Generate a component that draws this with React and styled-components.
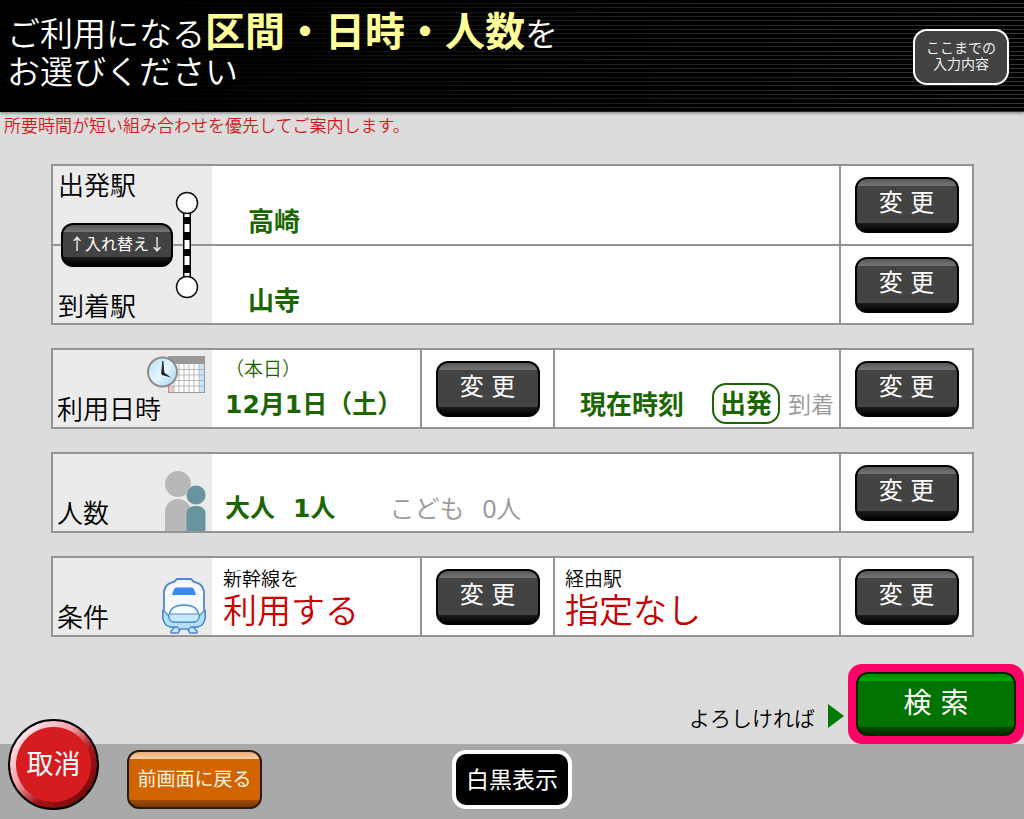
import React from "react"
import styled, { createGlobalStyle, css } from "styled-components"

const jp = `"Noto Sans CJK JP", sans-serif`
const mixed = `"DejaVu Sans", "Noto Sans CJK JP", sans-serif`
const light = `"Liberation Sans", "Noto Sans CJK JP", sans-serif`

const GlobalStyle = createGlobalStyle`
  * {
    box-sizing: border-box;
  }
  body {
    margin: 0;
    background: #dcdcdc;
    color: #000;
    font-family: ${jp};
  }
  button {
    margin: 0;
    padding: 0 0 4px;
    font-family: ${mixed};
    cursor: pointer;
  }
`

const Page = styled.div`
  display: flex;
  flex-direction: column;
  min-height: 100vh;
`

const Header = styled.header`
  display: flex;
  justify-content: space-between;
  align-items: flex-start;
  min-height: 112px;
  padding: 10px 15px 10px 7px;
  background: linear-gradient(90deg, #000 12%, rgba(0, 0, 0, 0) 100%),
    repeating-linear-gradient(
      180deg,
      #000 0,
      #000 3px,
      #363636 3px,
      #363636 4px,
      #000 4px,
      #000 7px,
      #363636 7px,
      #363636 8px,
      #000 8px,
      #000 12px,
      #363636 12px,
      #363636 13px
    );
  box-shadow: 0 1px 3px #777;
`

const Title = styled.h1`
  margin: 0;
  color: #fff;
  font-size: 33px;
  font-weight: 350;
  line-height: 38px;
  strong {
    color: #ffff99;
    font-size: 40px;
    font-weight: 700;
    line-height: 38px;
  }
`

const HistoryButton = styled.button`
  width: 96px;
  height: 56px;
  margin-top: 19px;
  border: 2px solid #fff;
  border-radius: 14px;
  background: #434343;
  color: #fff;
  font-family: ${jp};
  font-size: 14px;
  font-weight: 350;
  line-height: 16px;
`

const Main = styled.main`
  flex: 1;
  display: flex;
  flex-direction: column;
`

const Notice = styled.p`
  margin: 0 0 27px;
  padding: 0 4px;
  color: #d01818;
  font-size: 17px;
  font-weight: 350;
  line-height: 25px;
`

const Panels = styled.div`
  display: flex;
  flex-direction: column;
  gap: 23px;
  padding: 0 50px 0 51px;
`

const Panel = styled.section`
  display: grid;
  grid-template-columns: ${p =>
    p.$split ? "159px 208px 133px 1fr 133px" : "159px 1fr 133px"};
  grid-auto-rows: minmax(77px, auto);
  border: 2px solid #949494;
  background: #fff;
`

const RoutePanel = styled(Panel)`
  grid-template-rows: minmax(78px, auto) minmax(79px, auto);
`

const Label = styled.h2`
  margin: 0;
  font-size: 26px;
  font-weight: 350;
  line-height: 32px;
`

const LabelCell = styled.div`
  display: grid;
  padding: 0 6px 0 4px;
  background: #ebebeb;
  > * {
    grid-area: 1 / 1;
  }
  ${Label} {
    align-self: end;
    padding-bottom: 3px;
    z-index: 1;
  }
  svg {
    display: block;
    justify-self: end;
    align-self: ${p => p.$icon || "end"};
  }
`

const RouteCell = styled.div`
  grid-row: span 2;
  display: flex;
  justify-content: space-between;
  align-items: center;
  padding: 2px 13px 2px 5px;
  background: linear-gradient(
      transparent 78px,
      #949494 78px,
      #949494 80px,
      transparent 80px
    )
    #ebebeb;
  svg {
    display: block;
  }
`

const RouteLabels = styled.div`
  align-self: stretch;
  display: flex;
  flex-direction: column;
  justify-content: space-between;
`

const Cell = styled.div`
  display: flex;
  flex-direction: column;
  justify-content: flex-end;
  padding: 0 6px 6px ${p => p.$indent || 13}px;
  border-top: ${p => (p.$below ? "2px solid #949494" : "none")};
  white-space: nowrap;
`

const TimeCell = styled(Cell)`
  flex-direction: row;
  justify-content: flex-end;
  align-items: flex-end;
  gap: 8px;
  padding-right: 5px;
  border-left: 2px solid #949494;
`

const ConditionCell = styled(Cell)`
  padding-bottom: 7px;
  padding-left: ${p => (p.$divided ? 10 : 11)}px;
  border-left: ${p => (p.$divided ? "2px solid #949494" : "none")};
`

const ButtonCell = styled.div`
  display: flex;
  justify-content: center;
  align-items: center;
  border-left: 2px solid #949494;
  border-top: ${p => (p.$below ? "2px solid #949494" : "none")};
`

const Value = styled.span`
  color: ${p => (p.$off ? "#999" : "#1b6600")};
  font-family: ${p => (p.$off ? light : mixed)};
  font-size: ${p => (p.$counted ? 25 : 26)}px;
  font-weight: ${p => (p.$off ? 350 : 700)};
  line-height: 32px;
`

const Today = styled.span`
  margin-bottom: 6px;
  color: #1b6600;
  font-size: 19px;
  font-weight: 350;
  line-height: 30px;
`

const Time = styled(Value)`
  margin-right: 20px;
`

const Selected = styled(Value)`
  margin-bottom: -3px;
  padding: 3px 6px 2px;
  border: 2px solid #1b6600;
  border-radius: 14px;
`

const Unselected = styled(Value)`
  font-size: 23px;
`

const People = styled.div`
  display: flex;
  gap: 54px;
`

const Count = styled.div`
  display: flex;
  gap: 18px;
`

const ConditionName = styled.span`
  font-size: 19px;
  font-weight: 350;
  line-height: 24px;
`

const ConditionValue = styled.span`
  color: #c80000;
  font-size: 34px;
  font-weight: 350;
  line-height: 38px;
`

const gloss = css`
  border: 2px solid #000;
  border-radius: 12px;
  background: linear-gradient(
    180deg,
    #585858 0,
    #747474 7px,
    #434343 7px,
    #434343 calc(100% - 8px),
    #1c1c1c calc(100% - 8px),
    #000 100%
  );
  color: #fff;
`

const ChangeButton = styled.button`
  ${gloss}
  width: 104px;
  height: 56px;
  font-size: 24px;
  line-height: 32px;
`

const SwapButton = styled.button`
  ${gloss}
  width: 112px;
  height: 44px;
  margin-left: 3px;
  font-family: ${jp};
  font-size: 16px;
`

const SearchRow = styled.div`
  display: flex;
  justify-content: flex-end;
  align-items: flex-end;
  margin-top: auto;
  padding-top: 27px;
`

const Hint = styled.span`
  display: flex;
  align-items: center;
  gap: 13px;
  margin: 0 4px 11px 0;
  font-size: 21px;
  font-weight: 350;
  line-height: 32px;
`

const Arrow = styled.span`
  border-left: 16px solid #007a00;
  border-top: 12px solid transparent;
  border-bottom: 12px solid transparent;
  margin-bottom: 2px;
`

const SearchFrame = styled.div`
  padding: 8px;
  border-radius: 14px;
  background: #ff0066;
`

const SearchButton = styled.button`
  display: block;
  width: 160px;
  height: 64px;
  padding-bottom: 6px;
  border: 2px solid #002800;
  border-radius: 12px;
  background: linear-gradient(
    180deg,
    #009000 0,
    #00a800 7px,
    #007300 7px,
    #007300 calc(100% - 7px),
    #004d00 calc(100% - 7px),
    #003000 100%
  );
  color: #fff;
  font-size: 28px;
`

const Footer = styled.footer`
  display: grid;
  grid-template-columns: 1fr auto 1fr;
  height: 75px;
  background: #a9a9a9;
`

const FooterLeft = styled.div`
  display: flex;
  align-items: flex-start;
  gap: 28px;
  padding-left: 8px;
`

const CancelButton = styled.button`
  width: 91px;
  height: 91px;
  margin-top: -25px;
  border: 2px solid #000;
  border-radius: 50%;
  background: radial-gradient(circle, #d71c1f 37px, transparent 38px),
    linear-gradient(135deg, #ffe0e8 15%, #f4a0a8 40%, #a81418 62%, #780c0e 85%);
  color: #fff;
  font-size: 27px;
`

const BackButton = styled.button`
  width: 135px;
  height: 59px;
  margin-top: 6px;
  border: 2px solid #2a1a10;
  border-radius: 12px;
  background: linear-gradient(
    180deg,
    #ecaa74 0,
    #f6cfa8 7px,
    #d26400 7px,
    #d26400 calc(100% - 7px),
    #a04c00 calc(100% - 7px),
    #7c3a00 100%
  );
  color: #fff4e4;
  font-size: 19px;
`

const MonoButton = styled.button`
  width: 120px;
  height: 59px;
  margin-top: 6px;
  border: 4px solid #fff;
  border-radius: 14px;
  background: #000;
  color: #fff;
  font-size: 23px;
`

const RouteIcon = () => (
  <svg width="24" height="108" viewBox="0 0 24 108" aria-hidden="true">
    <rect x="8" y="20" width="8" height="68" fill="#000" />
    <path
      d="M12 22v4M12 33v8M12 49v9M12 65v9M12 82v5"
      stroke="#fff"
      strokeWidth="5"
    />
    <circle cx="12" cy="12" r="10.5" fill="#fff" stroke="#111" strokeWidth="1.5" />
    <circle cx="12" cy="96" r="10.5" fill="#fff" stroke="#111" strokeWidth="1.5" />
  </svg>
)

const CalendarIcon = () => (
  <svg width="60" height="46" viewBox="0 0 60 46" aria-hidden="true">
    <defs>
      <linearGradient id="clockFace" x1="0" y1="0" x2="1" y2="1">
        <stop offset="0" stopColor="#b4dcf2" />
        <stop offset="0.5" stopColor="#e4f5ff" />
        <stop offset="1" stopColor="#a4d2ee" />
      </linearGradient>
    </defs>
    <rect x="22" y="6" width="37" height="37" fill="#999" />
    <rect x="23" y="14" width="35" height="28" fill="#fff" />
    <rect x="53" y="14" width="5" height="28" fill="#c6e4fa" />
    <rect x="23" y="36" width="5" height="6" fill="#f6c4c4" />
    <path
      d="M23 19.5h35M23 25h35M23 30.5h35M23 36h35M28 14v28M33 14v28M38 14v28M43 14v28M48 14v28M53 14v28"
      stroke="#b9b9b9"
      strokeWidth="1"
    />
    <circle cx="16.5" cy="22" r="14.5" fill="url(#clockFace)" stroke="#8c8c8c" strokeWidth="2" />
    <path d="M16.8 11l1.2 12-2.5 1z" fill="#222" stroke="#222" strokeWidth="0.8" />
    <path d="M16 21l9 6.5-9-2.5z" fill="#222" />
  </svg>
)

const PeopleIcon = () => (
  <svg width="42" height="61" viewBox="0 0 42 61" aria-hidden="true">
    <g fill="#b8b8b8">
      <circle cx="14" cy="14" r="13" />
      <path d="M1 61V42a13 13 0 0 1 26 0v19z" />
    </g>
    <g fill="#68949e">
      <circle cx="32" cy="25" r="9.8" stroke="#ebebeb" strokeWidth="0.5" />
      <path d="M22.5 61V44q0-8 9.5-8t9.5 8v17z" />
    </g>
  </svg>
)

const TrainIcon = () => (
  <svg width="44" height="58" viewBox="1 0 44 58" aria-hidden="true">
    <g stroke="#4c88cc" strokeLinejoin="round">
      <path
        d="M11 49l2 2-3 3v2h7l3-5h6l3 5h7v-2l-3-3 2-2z"
        fill="#c4e8ff"
        strokeWidth="1.5"
      />
      <path
        d="M16 2h14l3 3q8 1 10 9v18l1 2v7q-1 8-9 9H11q-8-1-9-9v-7l1-2V14q2-8 10-9z"
        fill="#f5fafe"
        strokeWidth="1.8"
      />
      <path
        d="M2 33l6 6q0 6 6 6h18q6 0 6-6l6-6v8q-1 8-8 9h-6l-2 2H18l-2-2h-6q-7-1-8-9z"
        fill="#b4e0fc"
        strokeWidth="1.3"
      />
      <path d="M8 39q1-11 15-11t15 11q0 6-6 6H14q-6 0-6-6z" fill="#f5fafe" strokeWidth="1.3" />
      <path d="M8 37h30q1 8-6 8H14q-7 0-6-8z" fill="#c4e8ff" strokeWidth="1" />
    </g>
    <path d="M15 10.5h16q2 0 4 7.5H11q2-7.5 4-7.5z" fill="#3e88f4" />
  </svg>
)

const Change = ({ label, below }) => (
  <ButtonCell $below={below}>
    <ChangeButton type="button" aria-label={`${label} 変 更`}>
      変 更
    </ChangeButton>
  </ButtonCell>
)

const App = () => (
  <Page>
    <GlobalStyle />
    <Header>
      <Title>
        ご利用になる<strong>区間・日時・人数</strong>を
        <br />
        お選びください
      </Title>
      <HistoryButton type="button">
        ここまでの
        <br />
        入力内容
      </HistoryButton>
    </Header>
    <Main>
      <Notice>所要時間が短い組み合わせを優先してご案内します。</Notice>
      <Panels>
        <RoutePanel>
          <RouteCell>
            <RouteLabels>
              <Label>出発駅</Label>
              <SwapButton type="button">↑入れ替え↓</SwapButton>
              <Label>到着駅</Label>
            </RouteLabels>
            <RouteIcon />
          </RouteCell>
          <Cell $indent={36}>
            <Value>高崎</Value>
          </Cell>
          <Change label="出発駅" />
          <Cell $indent={36} $below>
            <Value>山寺</Value>
          </Cell>
          <Change label="到着駅" below />
        </RoutePanel>

        <Panel $split>
          <LabelCell $icon="start">
            <Label>利用日時</Label>
            <CalendarIcon />
          </LabelCell>
          <Cell>
            <Today>（本日）</Today>
            <Value $counted>12月1日（土）</Value>
          </Cell>
          <Change label="利用日" />
          <TimeCell>
            <Time>現在時刻</Time>
            <Selected>出発</Selected>
            <Unselected $off>到着</Unselected>
          </TimeCell>
          <Change label="時刻" />
        </Panel>

        <Panel>
          <LabelCell>
            <Label>人数</Label>
            <PeopleIcon />
          </LabelCell>
          <Cell>
            <People>
              <Count>
                <Value $counted>大人</Value>
                <Value $counted>1人</Value>
              </Count>
              <Count>
                <Value $counted $off>
                  こども
                </Value>
                <Value $counted $off>
                  0人
                </Value>
              </Count>
            </People>
          </Cell>
          <Change label="人数" />
        </Panel>

        <Panel $split>
          <LabelCell>
            <Label>条件</Label>
            <TrainIcon />
          </LabelCell>
          <ConditionCell>
            <ConditionName>新幹線を</ConditionName>
            <ConditionValue>利用する</ConditionValue>
          </ConditionCell>
          <Change label="新幹線" />
          <ConditionCell $divided>
            <ConditionName>経由駅</ConditionName>
            <ConditionValue>指定なし</ConditionValue>
          </ConditionCell>
          <Change label="経由駅" />
        </Panel>
      </Panels>

      <SearchRow>
        <Hint>
          よろしければ
          <Arrow />
        </Hint>
        <SearchFrame>
          <SearchButton type="button">検 索</SearchButton>
        </SearchFrame>
      </SearchRow>
    </Main>
    <Footer>
      <FooterLeft>
        <CancelButton type="button">取消</CancelButton>
        <BackButton type="button">前画面に戻る</BackButton>
      </FooterLeft>
      <MonoButton type="button">白黒表示</MonoButton>
    </Footer>
  </Page>
)

export default App
